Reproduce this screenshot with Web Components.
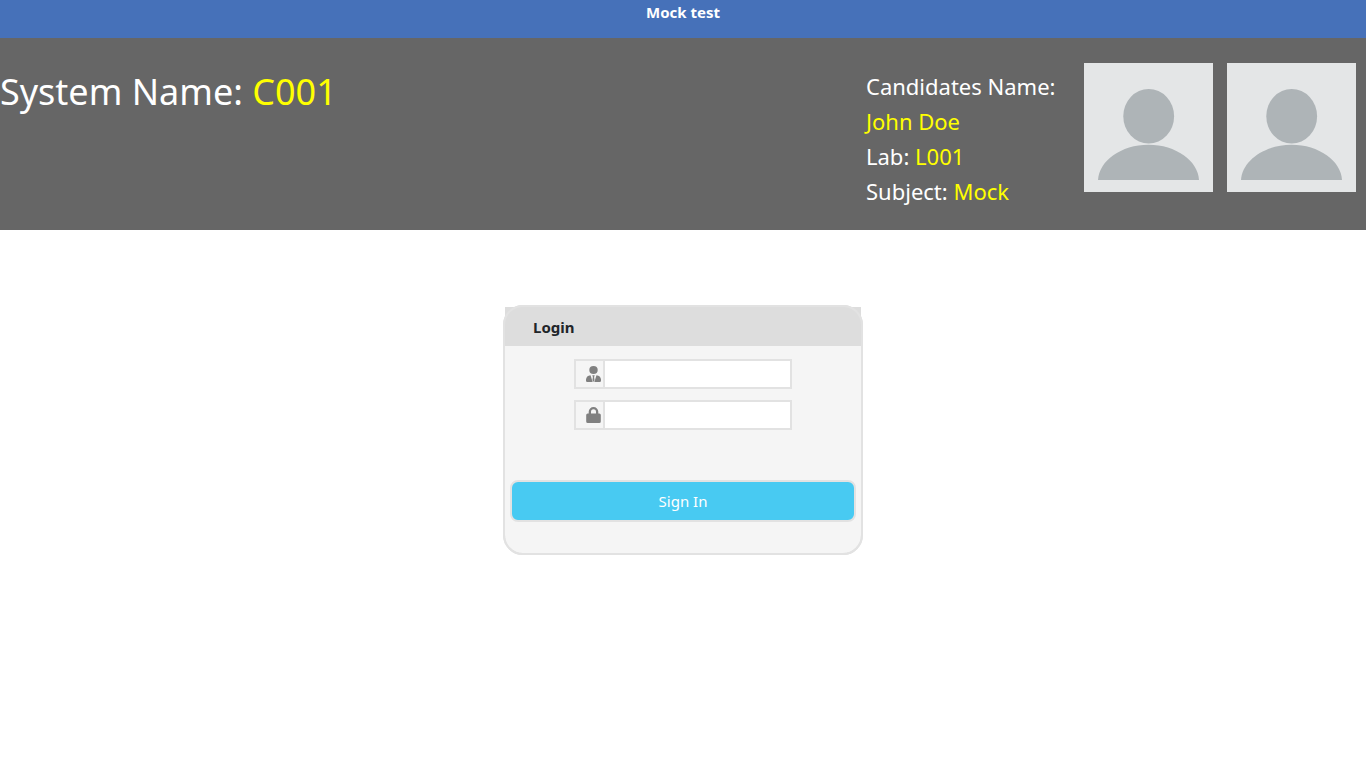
<!DOCTYPE html>
<html lang="en">
<head>
<meta charset="utf-8">
<title>Mock test</title>
<style>
  body { margin: 0; background: #fff; color: #212529; font: 16px/24px "Noto Sans", "Open Sans", sans-serif; }
</style>
</head>
<body>
<exam-page></exam-page>
<script>
const define = (name, html, setup) => customElements.define(name, class extends HTMLElement {
  constructor() {
    super();
    const t = document.createElement('template');
    t.innerHTML = html;
    this.attachShadow({ mode: 'open' }).append(t.content.cloneNode(true));
    if (setup) setup(this);
  }
});

define('title-bar', `
<style>
  :host { display: block; min-height: 38px; background: #4671b9; color: #fff; text-align: center; }
  h1 { margin: 0; font-size: 15px; line-height: 24px; font-weight: 700; }
</style>
<h1><slot></slot></h1>`);

define('photo-frame', `
<style>
  :host { display: block; width: 129px; height: 129px; background: #e4e6e7; }
  svg { display: block; width: 100%; height: 100%; fill: #aeb4b7; }
</style>
<svg viewBox="0 0 129 129" role="img" aria-label="Candidate photo">
  <ellipse cx="64.7" cy="53.2" rx="25.4" ry="27.3"/>
  <path d="M14 117C15 98 37 81.800 64.500 81.800S114 98 115 117Z"/>
</svg>`);

define('candidate-banner', `
<style>
  :host { display: flex; justify-content: space-between; box-sizing: border-box; min-height: 192px; padding: 25px 10px 0 0; background: #666; color: #fff; }
  .system { font-size: 36px; line-height: 58px; }
  .side { display: flex; gap: 14px; }
  .details { width: 204px; padding-top: 6px; font-size: 22px; line-height: 35px; }
  .details div { white-space: nowrap; }
  b { font-weight: 400; color: #ff0; }
</style>
<div class="system">System Name: <b><slot name="system"></slot></b></div>
<div class="side">
  <div class="details">
    <div>Candidates Name:</div>
    <div><b><slot name="name"></slot></b></div>
    <div>Lab: <b><slot name="lab"></slot></b></div>
    <div>Subject: <b><slot name="subject"></slot></b></div>
  </div>
  <photo-frame></photo-frame>
  <photo-frame></photo-frame>
</div>`);

define('icon-field', `
<style>
  :host { display: block; width: 218px; }
  label { display: flex; box-sizing: border-box; height: 30px; border: 2px solid #e2e2e2; }
  .icon { display: flex; align-items: center; justify-content: flex-end; box-sizing: border-box; width: 29px; padding-right: 2px; border-right: 2px solid #e2e2e2; }
  ::slotted(svg) { display: block; width: 16px; height: 16px; fill: #808080; }
  input { flex: 1; min-width: 0; border: 0; padding: 0 6px; background: #fff; font: inherit; outline: 0; }
</style>
<label><span class="icon"><slot></slot></span><input></label>`, host => {
  const input = host.shadowRoot.querySelector('input');
  input.type = host.getAttribute('type') || 'text';
  input.setAttribute('aria-label', host.getAttribute('label') || '');
});

define('login-card', `
<style>
  :host { display: block; position: relative; box-sizing: border-box; width: 360px; max-width: 100%; border: 2px solid #e2e2e2; border-radius: 20px; background: #f5f5f5; }
  /* keeps the rounded outline visible above the square heading */
  :host::after { content: ""; position: absolute; inset: -2px; border: 2px solid #e2e2e2; border-radius: 20px; pointer-events: none; }
  h2 { margin: 0; padding: 2px 28px 0; background: #ddd; font-size: 15px; line-height: 37px; font-weight: 700; }
  form { padding: 13px 5px 31px; }
  .fields { display: flex; flex-direction: column; align-items: center; gap: 11px; margin-bottom: 50px; }
  button { display: block; width: 100%; height: 42px; border: 2px solid #e2e2e2; border-radius: 8px; background: #48caf2; color: #fff; font: inherit; font-size: 15px; }
</style>
<h2>Login</h2>
<form>
  <div class="fields">
    <icon-field label="Username">
      <svg viewBox="0 0 16 16" aria-hidden="true"><ellipse cx="8.500" cy="4" rx="4.2" ry="4"/><path d="M5.500 9.200 7.700 16H2.300Q1 16 1 14.800V13.500Q1.300 9.800 5.500 9.200ZM11.500 9.200 9.300 16h5.400q1.300 0 1.300-1.200V13.500Q15.700 9.800 11.500 9.200ZM7.300 9.200h2.400L9.100 11 9.500 14l-1 2-1-2 .4-3Z"/></svg>
    </icon-field>
    <icon-field label="Password" type="password">
      <svg viewBox="0 0 16 16" aria-hidden="true"><path fill-rule="evenodd" d="M3.700 6.500V4.800a4.800 4.800 0 0 1 9.600 0V6.500H14.300Q15.800 6.500 15.800 8v6.500q0 1.500-1.500 1.500H2.700Q1.200 16 1.200 14.500V8Q1.200 6.500 2.700 6.500ZM6 6.500h5V4.700a2.500 2.500 0 0 0-5 0Z"/></svg>
    </icon-field>
  </div>
  <button type="button">Sign In</button>
</form>`);

define('exam-page', `
<style>
  :host { display: block; }
  main { display: flex; justify-content: center; padding: 75px 0; }
</style>
<title-bar>Mock test</title-bar>
<candidate-banner>
  <span slot="system">C001</span>
  <span slot="name">John Doe</span>
  <span slot="lab">L001</span>
  <span slot="subject">Mock</span>
</candidate-banner>
<main><login-card></login-card></main>`);
</script>
</body>
</html>
